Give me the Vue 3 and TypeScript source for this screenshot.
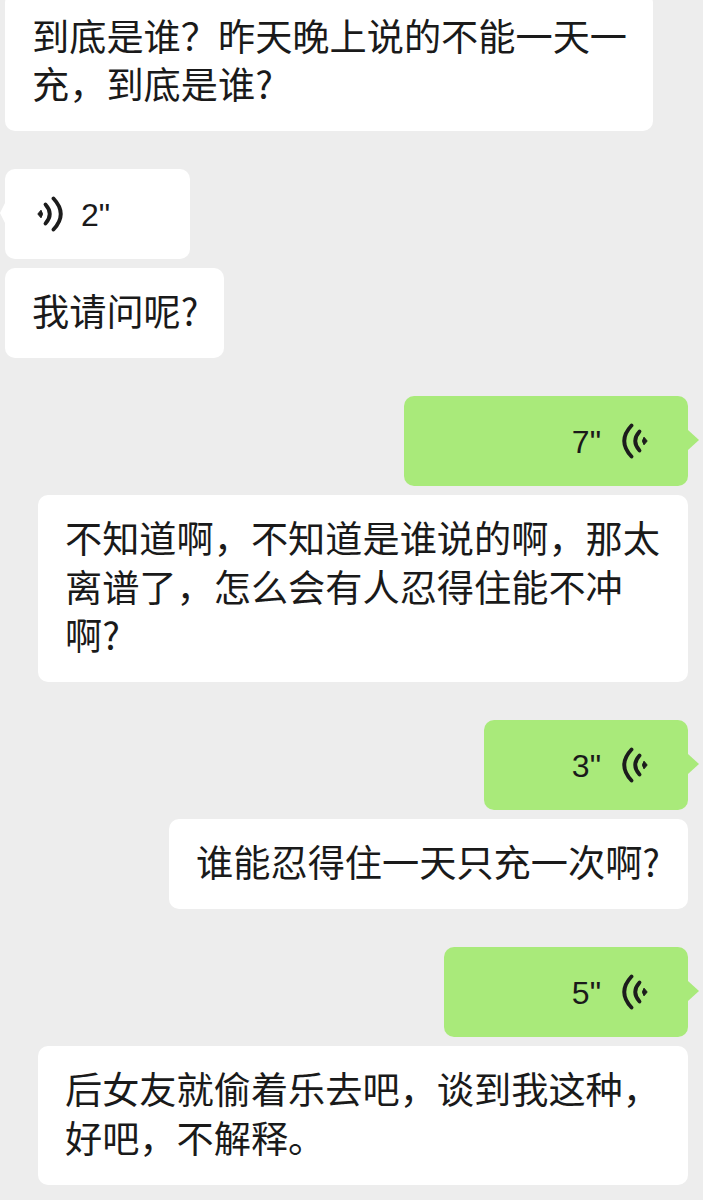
<script setup lang="ts">
type Message = {
  id: number
  side: 'left' | 'right'
  text?: string
  seconds?: number
}

const groups: Message[][] = [
  [{ id: 1, side: 'left', text: '到底是谁？昨天晚上说的不能一天一\n充，到底是谁?' }],
  [
    { id: 2, side: 'left', seconds: 2 },
    { id: 3, side: 'left', text: '我请问呢?' }
  ],
  [
    { id: 4, side: 'right', seconds: 7 },
    { id: 5, side: 'right', text: '不知道啊，不知道是谁说的啊，那太\n离谱了，怎么会有人忍得住能不冲\n啊?' }
  ],
  [
    { id: 6, side: 'right', seconds: 3 },
    { id: 7, side: 'right', text: '谁能忍得住一天只充一次啊?' }
  ],
  [
    { id: 8, side: 'right', seconds: 5 },
    { id: 9, side: 'right', text: '后女友就偷着乐去吧，谈到我这种，\n好吧，不解释。' }
  ]
]

// voice bubbles grow with the clip length
const voiceWidth = (seconds: number) => `${144 + seconds * 20}px`
</script>

<template>
  <div class="chat">
    <div v-for="(group, i) in groups" :key="i" class="group">
      <template v-for="msg in group" :key="msg.id">
        <div
          v-if="msg.seconds"
          class="bubble voice"
          :class="msg.side"
          :style="{ width: voiceWidth(msg.seconds) }"
        >
          <svg class="wave" viewBox="0 0 26 36" width="26" height="36">
            <path d="M0.8 18 L4 14.2 Q7 18 4 21.8 Z" class="dot" />
            <path d="M8.5 8.5 Q17 18 8.5 27.5" class="arc" />
            <path d="M16.5 2.5 Q31 18 16.5 33.5" class="arc" />
          </svg>
          <span class="secs">{{ msg.seconds }}"</span>
        </div>
        <div v-else class="bubble text" :class="msg.side">{{ msg.text }}</div>
      </template>
    </div>
  </div>
</template>

<style scoped>
.chat { margin-top: -7.5px; padding: 0 15px 16px 5px; display: flex; flex-direction: column; gap: 38px; }
.group { display: flex; flex-direction: column; gap: 9px; }
.bubble { position: relative; box-sizing: border-box; border-radius: 10px; background: #fff; color: #1a1a1a; }
.bubble.left { align-self: flex-start; }
.bubble.right { align-self: flex-end; }
.text { padding: 18px 27px 24px 27px; font-family: "Noto Sans CJK SC", "Liberation Sans", sans-serif; font-size: 37.2px; line-height: 48.25px; white-space: pre; }
.text.left { padding-right: 26px; }
.text.right { padding-right: 28px; }
.voice { height: 90px; display: flex; align-items: center; gap: 18px; padding: 0 32px; }
.voice.left { min-width: 185px; }
.voice.right { flex-direction: row-reverse; gap: 21px; padding: 0 40px; background: #a9ea7a; }
.voice.right .wave { transform: scaleX(-1); }
.voice::before { content: ""; position: absolute; top: 50%; width: 0; height: 0; margin-top: -11px; border-top: 10px solid transparent; border-bottom: 10px solid transparent; }
.voice.left::before { left: -5px; border-right: 5px solid #fff; }
.voice.right::before { right: -11px; border-left: 11px solid #a9ea7a; }
.wave { flex: none; }
.dot { fill: #1c1c1c; stroke: #1c1c1c; stroke-width: 1; stroke-linejoin: round; }
.arc { fill: none; stroke: #1c1c1c; stroke-width: 3.8; stroke-linecap: round; }
.secs { padding-top: 2px; font-family: "Liberation Sans", sans-serif; font-size: 32px; }
</style>

<style>
body { background: #ededed; }
</style>
